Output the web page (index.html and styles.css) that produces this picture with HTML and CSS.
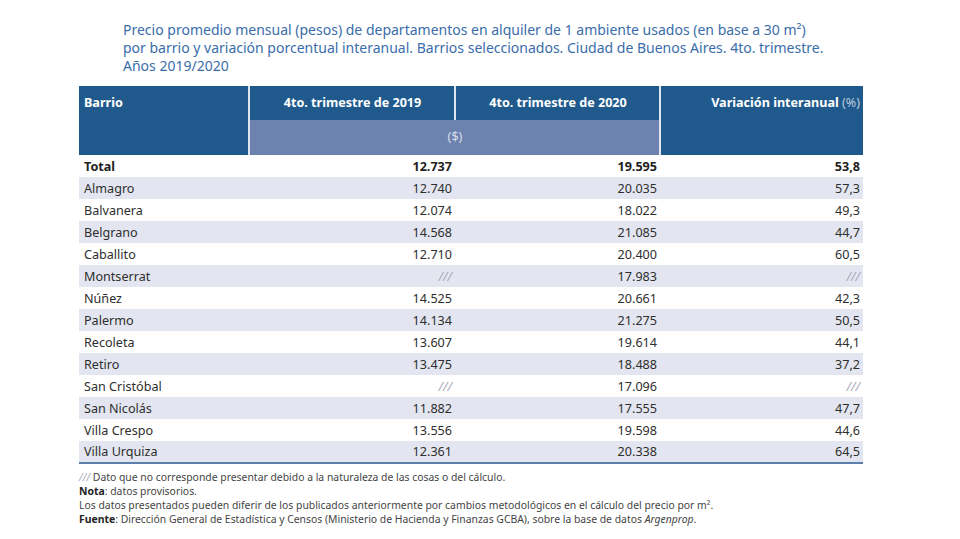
FILE: index.html
```html
<!DOCTYPE html>
<html lang="es">
    <head>
        <meta name="viewport" content="width=device-width, initial-scale=1">
        <title>Precio promedio mensual de departamentos en alquiler</title>
        <link rel="stylesheet" href="styles.css">
    </head>
    <body>
        <div class="page">
            <h1 class="title">Precio promedio mensual (pesos) de departamentos en alquiler de 1 ambiente usados (en base a 30 m²)<br>
                por barrio y variación porcentual interanual. Barrios seleccionados. Ciudad de Buenos Aires. 4to. trimestre.<br>
                Años 2019/2020</h1>
            <table class="data">
                <colgroup>
                    <col class="c-barrio">
                    <col class="c-2019">
                    <col class="c-2020">
                    <col class="c-var">
                </colgroup>
                <thead>
                    <tr class="h-top">
                        <th class="left" rowspan="2">Barrio</th>
                        <th class="sep">4to. trimestre de 2019</th>
                        <th class="sep">4to. trimestre de 2020</th>
                        <th class="sep right" rowspan="2">Variación interanual <span class="unit">(%)</span></th>
                    </tr>
                    <tr class="h-sub">
                        <th class="sep sub" colspan="2">($)</th>
                    </tr>
                </thead>
                <tbody>
                    <tr class="total"><td>Total</td><td>12.737</td><td>19.595</td><td>53,8</td></tr>
                    <tr><td>Almagro</td><td>12.740</td><td>20.035</td><td>57,3</td></tr>
                    <tr><td>Balvanera</td><td>12.074</td><td>18.022</td><td>49,3</td></tr>
                    <tr><td>Belgrano</td><td>14.568</td><td>21.085</td><td>44,7</td></tr>
                    <tr><td>Caballito</td><td>12.710</td><td>20.400</td><td>60,5</td></tr>
                    <tr><td>Montserrat</td><td class="na">///</td><td>17.983</td><td class="na">///</td></tr>
                    <tr><td>Núñez</td><td>14.525</td><td>20.661</td><td>42,3</td></tr>
                    <tr><td>Palermo</td><td>14.134</td><td>21.275</td><td>50,5</td></tr>
                    <tr><td>Recoleta</td><td>13.607</td><td>19.614</td><td>44,1</td></tr>
                    <tr><td>Retiro</td><td>13.475</td><td>18.488</td><td>37,2</td></tr>
                    <tr><td>San Cristóbal</td><td class="na">///</td><td>17.096</td><td class="na">///</td></tr>
                    <tr><td>San Nicolás</td><td>11.882</td><td>17.555</td><td>47,7</td></tr>
                    <tr><td>Villa Crespo</td><td>13.556</td><td>19.598</td><td>44,6</td></tr>
                    <tr><td>Villa Urquiza</td><td>12.361</td><td>20.338</td><td>64,5</td></tr>
                </tbody>
            </table>
            <div class="notes">
                <p><span class="na">///</span> Dato que no corresponde presentar debido a la naturaleza de las cosas o del cálculo.</p>
                <p><strong>Nota</strong>: datos provisorios.</p>
                <p>Los datos presentados pueden diferir de los publicados anteriormente por cambios metodológicos en el cálculo del precio por m².</p>
                <p><strong>Fuente</strong>: Dirección General de Estadística y Censos (Ministerio de Hacienda y Finanzas GCBA), sobre la base de datos <em>Argenprop</em>.</p>
            </div>
        </div>
    </body>
</html>
```

FILE: styles.css
```css
body, html {
    padding: 0;
    margin: 0;
    background: #fff;
    font-family: "Noto Sans", "Open Sans", sans-serif;
}
* {
    box-sizing: border-box;
}
.page {
    padding: 21px 0 0 79px;
}
.title {
    margin: 0 0 11px 44px;
    font-size: 14px;
    font-weight: normal;
    line-height: 18px;
    color: #3a6daa;
}
.data {
    border-collapse: collapse;
    width: 784px;
    font-size: 12.6px;
    color: #2e2e2e;
}
.c-barrio {
    width: 170px;
}
.c-2019 {
    width: 206px;
}
.c-2020 {
    width: 205px;
}
.c-var {
    width: 203px;
}
.data th {
    background: #205a8c;
    color: #fff;
    font-weight: bold;
    font-size: 12.6px;
    vertical-align: top;
    padding: 8px 4px 0 5px;
    text-align: center;
}
.data th.left {
    text-align: left;
}
.data th.right {
    text-align: right;
    padding-right: 3px;
}
.data th.sep {
    border-left: 2px solid #dfe6ef;
}
.h-top th {
    height: 34px;
}
.h-sub th {
    height: 35px;
}
.data th.sub {
    background: #6d82ae;
    color: #d6deea;
    font-weight: normal;
    border-top: 0;
}
.unit {
    color: #b9c9de;
    font-weight: normal;
}
.data td {
    height: 22px;
    padding: 0 3px 0 5px;
    text-align: right;
    white-space: nowrap;
}
.data td:first-child {
    text-align: left;
}
.data tbody tr:nth-child(even) td {
    background: #e3e6f0;
}
.data tbody tr:last-child td {
    border-bottom: 2px solid #5d7fac;
}
.total td {
    font-weight: bold;
    color: #222;
}
.na {
    color: #aab;
    font-style: italic;
}
.notes {
    padding-top: 6px;
    font-size: 10.4px;
    color: #444;
    line-height: 14px;
}
.notes p {
    margin: 0;
}
.notes strong {
    color: #222;
}
```
